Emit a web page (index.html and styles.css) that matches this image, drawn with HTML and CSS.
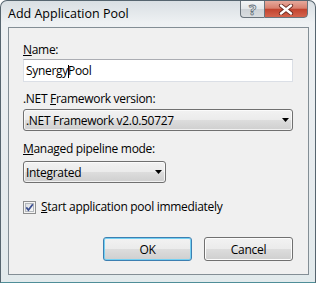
FILE: index.html
```html
<!DOCTYPE html>
<html lang="en">
<head>
    <meta charset="UTF-8">
    <title>Add Application Pool</title>
    <link rel="stylesheet" href="styles.css">
</head>
<body>
    <div class="window">
        <div class="titlebar">
            <div class="title">Add Application Pool</div>
            <div class="caption-buttons">
                <div class="cap-btn help">?</div>
                <div class="cap-btn close">
                    <svg width="16" height="11" viewBox="0 0 16 11">
                        <path d="M3 1.5 L13 9.5 M13 1.5 L3 9.5" stroke="#6a2a20" stroke-width="4.2" stroke-linecap="round"/>
                        <path d="M3 1.5 L13 9.5 M13 1.5 L3 9.5" stroke="#ffffff" stroke-width="2.4" stroke-linecap="round"/>
                    </svg>
                </div>
            </div>
        </div>

        <div class="client">
            <div class="field-label name-label"><u>N</u>ame:</div>
            <div class="textbox">Synergy<span class="caret"></span>Pool</div>

            <div class="field-label fw-label">.NET <u>F</u>ramework version:</div>
            <div class="combo wide">
                <span>.NET Framework v2.0.50727</span>
                <svg width="7" height="4" viewBox="0 0 7 4"><polygon points="0,0 7,0 3.5,4" fill="#000"/></svg>
            </div>

            <div class="field-label mode-label"><u>M</u>anaged pipeline mode:</div>
            <div class="combo narrow">
                <span>Integrated</span>
                <svg width="7" height="4" viewBox="0 0 7 4"><polygon points="0,0 7,0 3.5,4" fill="#000"/></svg>
            </div>

            <div class="check-row">
                <svg class="checkbox" width="13" height="13" viewBox="0 0 13 13">
                    <defs>
                        <linearGradient id="cb" x1="0" y1="0" x2="1" y2="1">
                            <stop offset="0" stop-color="#d9dcdf"/>
                            <stop offset="1" stop-color="#fbfbfb"/>
                        </linearGradient>
                    </defs>
                    <rect x="0.5" y="0.5" width="12" height="12" fill="#f4f4f4" stroke="#8e8f8f"/>
                    <rect x="2.5" y="2.5" width="8" height="8" fill="url(#cb)" stroke="#b4b8bd"/>
                    <path d="M3.3 6.4 L5.4 9 L9.8 3.2" fill="none" stroke="#3b4f91" stroke-width="1.7"/>
                </svg>
                <span><u>S</u>tart application pool immediately</span>
            </div>

            <div class="buttons">
                <button class="btn default">OK</button>
                <button class="btn">Cancel</button>
            </div>
        </div>
    </div>
</body>
</html>
```

FILE: styles.css
```css
body {
    margin: 0;
    padding: 0;
    font-family: "Open Sans", "Noto Sans", sans-serif;
    font-size: 12px;
    line-height: 15px;
    color: #000;
    background-color: #fff;
}

.window {
    width: 316px;
    height: 283px;
    box-sizing: border-box;
    border: 1px solid #56656f;
    border-bottom-color: #4f8e98;
    border-radius: 7px 7px 0 0;
    background: linear-gradient(to bottom, #d9dfe3 0, #eef1f3 22px, #e6ebee 60%, #e2eaec 100%);
    display: flex;
    flex-direction: column;
    overflow: hidden;
}

.titlebar {
    height: 26px;
    flex-shrink: 0;
    display: flex;
    justify-content: space-between;
    align-items: flex-start;
    padding-left: 7px;
}

.title {
    padding-top: 5px;
    font-size: 12.5px;
}

.caption-buttons {
    display: flex;
    margin-top: -1px;
    margin-right: 7px;
}

.cap-btn {
    height: 18px;
    box-sizing: border-box;
    border: 1px solid #6a747c;
    display: flex;
    align-items: center;
    justify-content: center;
}

.help {
    width: 24px;
    border-right: none;
    border-radius: 0 0 0 4px;
    background: linear-gradient(to bottom, #f3f5f6 0, #e2e6e9 50%, #cdd2d6 52%, #d9dde0 100%);
    color: #eef1f3;
    -webkit-text-stroke: 0.8px #66717a;
    font-size: 15px;
    font-weight: bold;
}

.close {
    width: 44px;
    border-radius: 0 0 4px 0;
    background: linear-gradient(to bottom, #e6a99c 0, #d8806e 45%, #c2442f 52%, #d4644d 100%);
}

.client {
    flex: 1;
    margin: 0 6px 7px 7px;
    border: 1px solid #838e95;
    background-color: #f0f0f0;
    padding: 14px 15px 0 14px;
    display: flex;
    flex-direction: column;
    align-items: flex-start;
    letter-spacing: -0.3px;
}

.field-label {
    height: 15px;
}

.fw-label {
    margin-top: 9px;
}

.mode-label {
    margin-top: 10px;
}

.textbox {
    margin-top: 2px;
    width: 270px;
    height: 23px;
    box-sizing: border-box;
    padding: 3px 2px;
    background-color: #fff;
    border: 1px solid #dbdfe6;
    border-top-color: #abadb3;
}

.caret {
    display: inline-block;
    width: 1px;
    height: 13px;
    margin-right: -1px;
    vertical-align: -3px;
    background-color: #000;
}

.combo {
    height: 22px;
    box-sizing: border-box;
    border: 1px solid #707070;
    border-radius: 3px;
    background: linear-gradient(to bottom, #f2f2f2 0, #ebebeb 50%, #dddddd 50%, #cfcfcf 100%);
    box-shadow: inset 0 0 0 1px rgba(255, 255, 255, 0.7);
    display: flex;
    align-items: center;
    justify-content: space-between;
    padding: 0 3px 0 2px;
}

.combo.wide {
    margin-top: 3px;
    width: 270px;
}

.combo.narrow {
    margin-top: 5px;
    width: 143px;
}

.check-row {
    margin-top: 16px;
    display: flex;
    align-items: center;
    gap: 5px;
}

.checkbox {
    margin-top: 2px;
}

.buttons {
    margin-top: 23px;
    align-self: stretch;
    display: flex;
    justify-content: flex-end;
    gap: 12px;
}

.btn {
    width: 89px;
    height: 24px;
    box-sizing: border-box;
    padding: 0;
    font-family: inherit;
    font-size: 12px;
    letter-spacing: -0.3px;
    color: #000;
    border: 1px solid #707070;
    border-radius: 3px;
    background: linear-gradient(to bottom, #f2f2f2 0, #ebebeb 50%, #dddddd 50%, #cfcfcf 100%);
    box-shadow: inset 0 0 0 1px #fcfcfc;
}

.btn.default {
    border-color: #3c7fb1;
    box-shadow: inset 0 0 0 1px #74d0f2;
}
```
